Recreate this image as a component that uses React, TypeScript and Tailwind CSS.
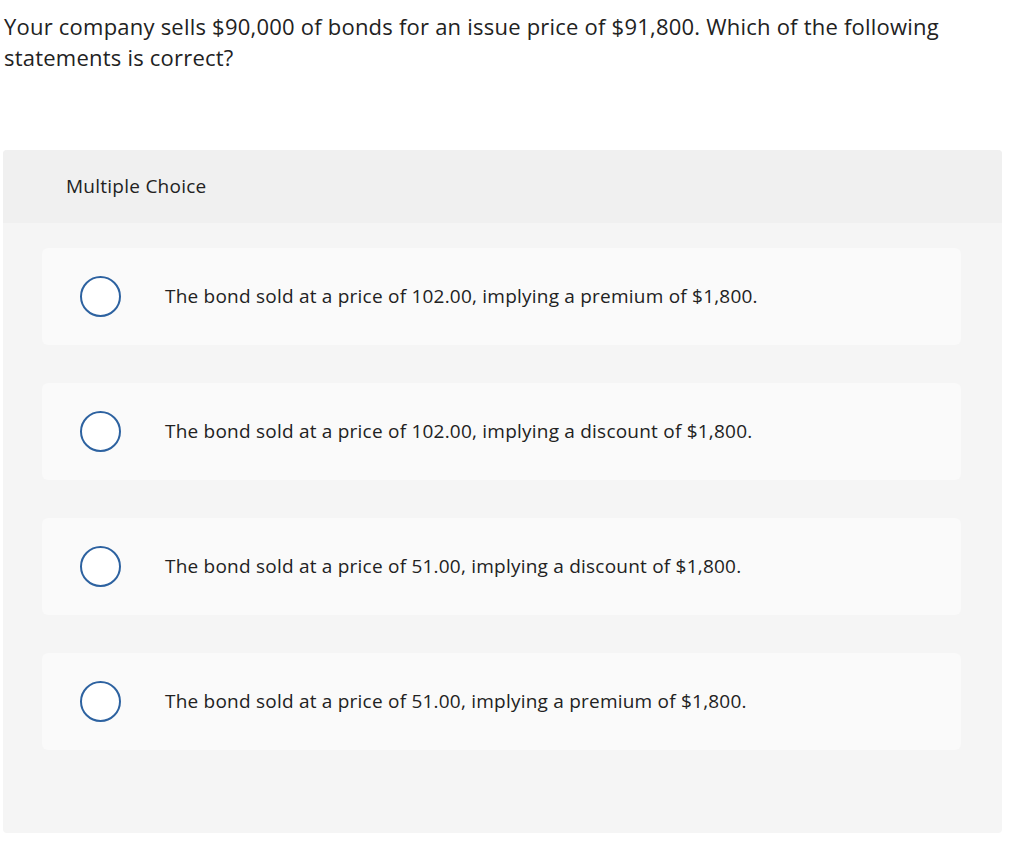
const options = [
  'The bond sold at a price of 102.00, implying a premium of $1,800.',
  'The bond sold at a price of 102.00, implying a discount of $1,800.',
  'The bond sold at a price of 51.00, implying a discount of $1,800.',
  'The bond sold at a price of 51.00, implying a premium of $1,800.',
];

export default function App() {
  return (
    <div className="min-h-[855px] w-[1024px] bg-white text-[#222222] font-['Open_Sans',sans-serif]">
      <p className="w-[970px] pl-[4px] pt-[11px] text-[22px] leading-[31px] tracking-[0.22px]">
        Your company sells $90,000 of bonds for an issue price of $91,800. Which of the following statements is correct?
      </p>

      <div className="mt-[77px] ml-[3px] w-[999px] overflow-hidden rounded-[4px] bg-[#f5f5f5]">
        <div className="flex h-[73px] items-center bg-[#f0f0f0] pl-[63px] text-[19px] tracking-[0.25px]">
          Multiple Choice
        </div>
        <div className="flex flex-col gap-[38px] pb-[83px] pl-[39px] pr-[41px] pt-[25px]">
          {options.map((text) => (
            <label
              key={text}
              className="flex h-[97px] cursor-pointer items-center rounded-[6px] bg-[#fafafa] pl-[38px]"
            >
              <span className="h-[41px] w-[41px] shrink-0 rounded-full border-2 border-[#2d62a0] bg-white" />
              <span className="ml-[44px] text-[19px] tracking-[0.22px]">{text}</span>
            </label>
          ))}
        </div>
      </div>
    </div>
  );
}
